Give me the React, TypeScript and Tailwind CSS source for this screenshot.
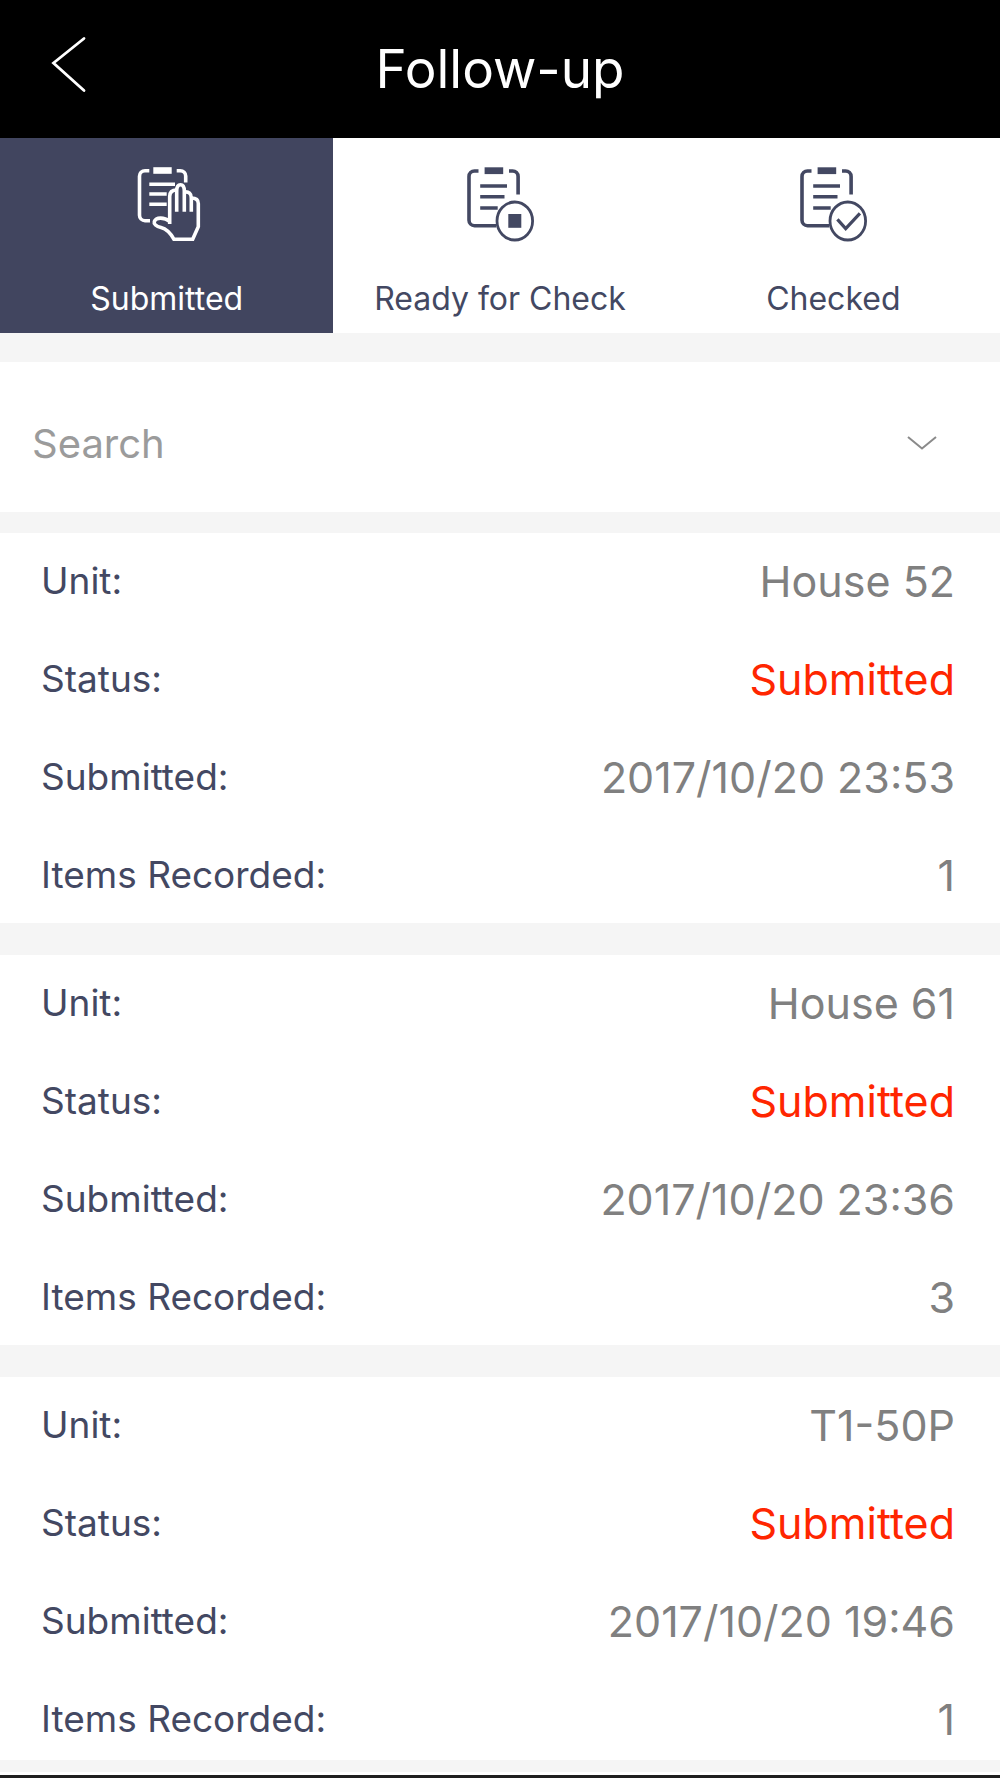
import { useState } from 'react';
import type { ReactNode } from 'react';

type TabId = 'submitted' | 'ready' | 'checked';

interface FollowUpRecord {
  unit: string;
  status: string;
  submittedAt: string;
  itemsRecorded: number;
}

const RECORDS: FollowUpRecord[] = [
  { unit: 'House 52', status: 'Submitted', submittedAt: '2017/10/20 23:53', itemsRecorded: 1 },
  { unit: 'House 61', status: 'Submitted', submittedAt: '2017/10/20 23:36', itemsRecorded: 3 },
  { unit: 'T1-50P', status: 'Submitted', submittedAt: '2017/10/20 19:46', itemsRecorded: 1 },
];

/** Clipboard with a hand laid over its corner */
function SubmittedIcon() {
  return (
    <svg viewBox="0 0 92 96" className="h-24 w-[92px]" fill="none" stroke="currentColor" strokeWidth="3.6" aria-hidden="true">
      <path d="M28.3 15.7H24a5.5 5.5 0 0 0-5.5 5.5v39a5.5 5.5 0 0 0 5.5 5.5h5" />
      <path d="M55.7 15.7h3.6a5.4 5.4 0 0 1 5.4 5.4v6.4" />
      <path d="M32.3 15.5h18.4" strokeWidth="6.6" />
      <path d="M28.3 29.3H54M28.3 39h17.4M28.3 49.3h17.4" />
      <path d="M48.7 69V41.5q0-6.5 7-6.5" />
      <path d="M55.7 56.7V36q0-6.3 3.8-6.3t3.8 6.3v20.7" />
      <path d="M63.3 37q7-.8 7 6v13.7" />
      <path d="M70.3 43q7 0 7 5.5v23.2l-5.6 12.6H53C49.5 78 44.5 73.6 40 72.5c-5-1.2-7.4-3.6-6.7-5.8C35 62 43 62 49 66.5" />
    </svg>
  );
}

/** Clipboard with a round badge, whose mark is given as children */
function ClipboardBadgeIcon({ children }: { children: ReactNode }) {
  return (
    <svg viewBox="0 0 92 96" className="h-24 w-[92px]" fill="none" stroke="currentColor" strokeWidth="3.6" aria-hidden="true">
      <path d="M24.5 16h-4a5.5 5.5 0 0 0-5.5 5.5v43.7a5.5 5.5 0 0 0 5.5 5.5H42.3" />
      <path d="M55 16h3.6a5.5 5.5 0 0 1 5.5 5.5v17.9" />
      <path d="M30.6 15.7h18.6" strokeWidth="6.8" />
      <path d="M26.2 31H53M26.2 41.7h24.3M26.2 53h17.5" />
      <ellipse cx="60.8" cy="66" rx="17.8" ry="19" strokeWidth="2.8" />
      {children}
    </svg>
  );
}

const TABS: { id: TabId; label: string; icon: ReactNode }[] = [
  { id: 'submitted', label: 'Submitted', icon: <SubmittedIcon /> },
  {
    id: 'ready',
    label: 'Ready for Check',
    icon: (
      <ClipboardBadgeIcon>
        <rect x="54.3" y="59" width="13" height="13.8" fill="currentColor" stroke="none" />
      </ClipboardBadgeIcon>
    ),
  },
  {
    id: 'checked',
    label: 'Checked',
    icon: (
      <ClipboardBadgeIcon>
        <path d="m50.4 64.4 8.3 9.2 14.2-15.3" strokeWidth="3.2" />
      </ClipboardBadgeIcon>
    ),
  },
];

function Header() {
  return (
    <header className="grid grid-cols-[1fr_auto_1fr] items-center bg-black pt-[22px] pb-8 text-white">
      <button type="button" aria-label="Back" className="ml-12 justify-self-start">
        <svg viewBox="0 0 38 58" className="h-[58px] w-[38px]" fill="none" stroke="currentColor" strokeWidth="2.8" strokeLinecap="round" aria-hidden="true">
          <path d="M36 3.5 5.5 28 36 55.5" />
        </svg>
      </button>
      <h1 className="pt-2.5 text-[53px] leading-[74px]">Follow-up</h1>
    </header>
  );
}

function TabBar({ active, onChange }: { active: TabId; onChange: (id: TabId) => void }) {
  return (
    <nav className="grid grid-cols-3 bg-white">
      {TABS.map((tab) => (
        <button
          key={tab.id}
          type="button"
          aria-pressed={tab.id === active}
          onClick={() => onChange(tab.id)}
          className={`flex flex-col items-center gap-6 pt-[17px] pb-2.5 ${
            tab.id === active ? 'bg-[#41455f] text-white' : 'text-[#434862]'
          }`}
        >
          {tab.icon}
          <span className="text-[32px] leading-[48px]">{tab.label}</span>
        </button>
      ))}
    </nav>
  );
}

function SearchBar() {
  return (
    <div className="flex items-center bg-white pt-[58px] pr-[62px] pb-11 pl-8">
      <input
        type="text"
        aria-label="Search"
        placeholder="Search"
        className="min-w-0 flex-1 text-[40px] leading-[48px] outline-none placeholder:text-[#9b9b9b] placeholder:opacity-100"
      />
      <button type="button" aria-label="Show search options" className="text-[#8a8a8a]">
        <svg viewBox="0 0 32 18" className="h-[18px] w-8" fill="none" stroke="currentColor" strokeWidth="2" aria-hidden="true">
          <path d="m2 2 14 11.5L30 2" />
        </svg>
      </button>
    </div>
  );
}

function Row({ label, children, alert = false }: { label: string; children: ReactNode; alert?: boolean }) {
  return (
    <div className="flex items-center justify-between leading-[48px]">
      <dt className="text-[37px] text-[#434862]">{label}</dt>
      <dd className={`text-[43px] ${alert ? 'text-[#ff2600]' : 'text-[#808080]'}`}>{children}</dd>
    </div>
  );
}

function RecordCard({ record }: { record: FollowUpRecord }) {
  return (
    <dl className="flex flex-col gap-[50px] bg-white py-6 pr-[45px] pl-[41px] last:pb-[17px]">
      <Row label="Unit:">{record.unit}</Row>
      <Row label="Status:" alert>
        {record.status}
      </Row>
      <Row label="Submitted:">{record.submittedAt}</Row>
      <Row label="Items Recorded:">{record.itemsRecorded}</Row>
    </dl>
  );
}

export default function App() {
  const [activeTab, setActiveTab] = useState<TabId>('submitted');

  return (
    <div className="bg-[#f5f5f5] font-['Inter',sans-serif]">
      <Header />
      <TabBar active={activeTab} onChange={setActiveTab} />
      <main className="pt-[29px] pb-3">
        <SearchBar />
        <div className="mt-[21px] flex flex-col gap-8">
          {RECORDS.map((record) => (
            <RecordCard key={record.submittedAt} record={record} />
          ))}
        </div>
      </main>
      <div className="h-1.5 border-b-3 border-[#1f1f1f] bg-white" />
    </div>
  );
}
